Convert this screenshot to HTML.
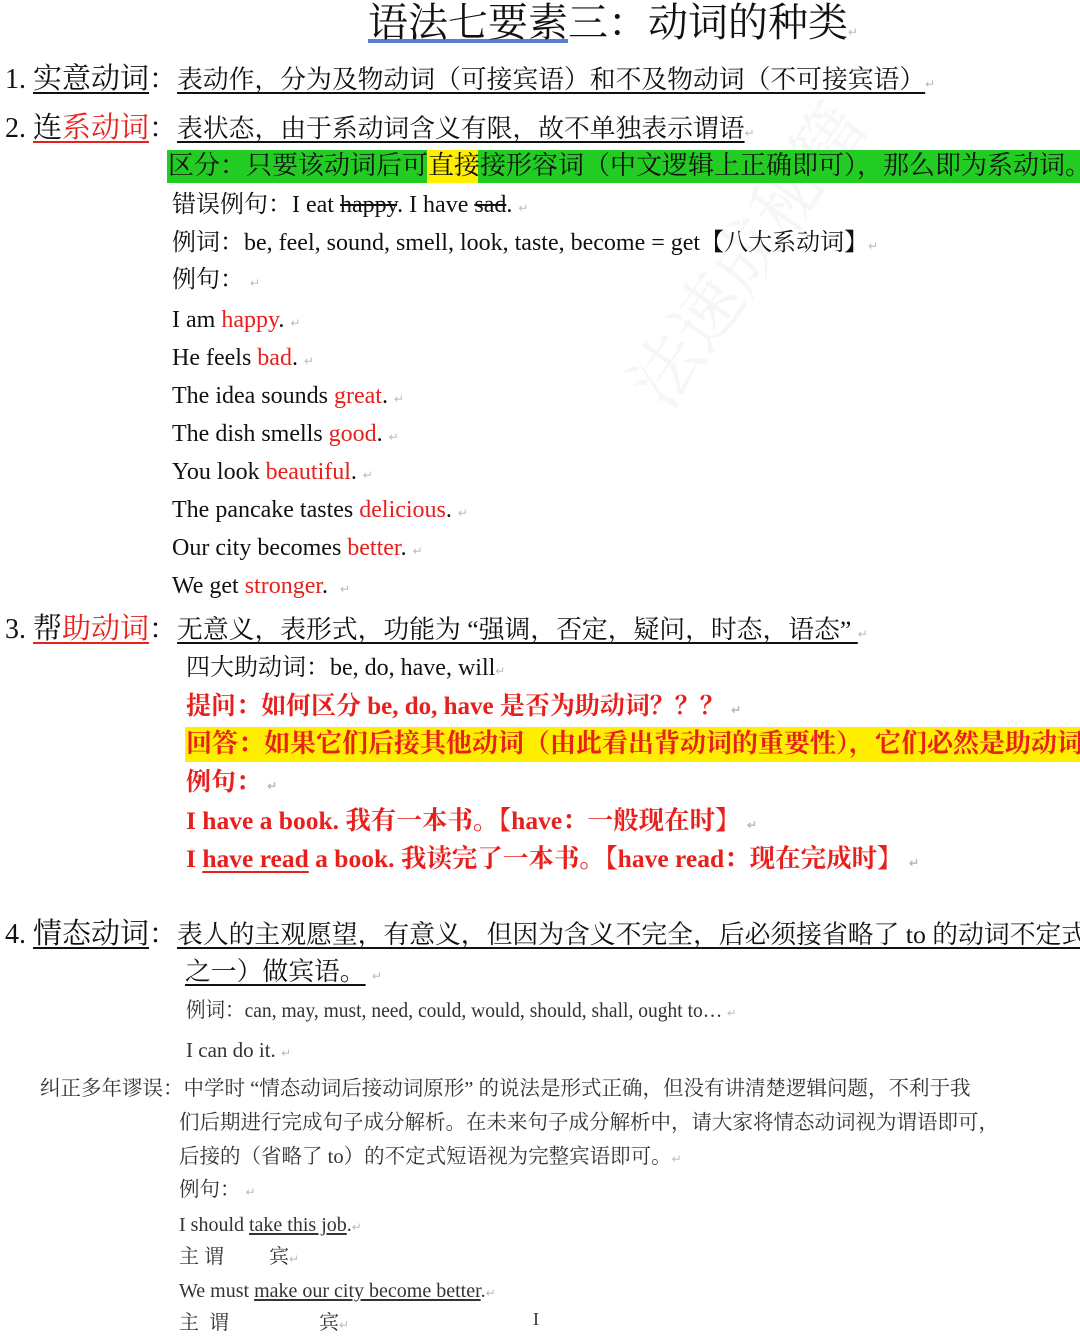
<!DOCTYPE html>
<html><head><meta charset="utf-8">
<style>
html,body{margin:0;padding:0;background:#fff;}
body{width:1080px;height:1342px;position:relative;overflow:hidden;font-family:"Liberation Serif","Noto Serif CJK SC",serif;color:#111;}
.l{position:absolute;white-space:nowrap;line-height:1;}
.r{color:#e8201c;}
.u{text-decoration:underline;text-underline-offset:4px;}
.b{font-weight:bold;}
.m{color:#bbb;font-size:12px;}
.g{color:#333;}
</style></head><body>
<div class="l" style="left:620px;top:380px;font-size:70px;color:#f6f6f6;transform:rotate(-55deg);transform-origin:left top;">法速成秘籍</div>

<div class="l" style="left:368px;top:3px;font-size:40px;"><span style="text-decoration:underline;text-decoration-color:#5b7fd0;text-underline-offset:3px;">语法七要素</span>三：动词的种类<span class="m">↵</span></div>

<div class="l" style="left:5px;top:65px;font-size:28px;">1. <span class="u" style="font-size:29px">实意动词</span>：<span class="u" style="font-size:25.8px">表动作，分为及物动词（可接宾语）和不及物动词（不可接宾语）</span><span class="m">↵</span></div>

<div class="l" style="left:5px;top:114px;font-size:28px;">2. <span class="u" style="font-size:29px;text-decoration-color:#e8201c">连<span class="r">系动词</span></span>：<span class="u" style="font-size:25.8px">表状态，由于系动词含义有限，故不单独表示谓语</span><span class="m">↵</span></div>

<div style="position:absolute;left:167px;top:150px;width:913px;height:33px;background:#22cc22;"></div>
<div style="position:absolute;left:427px;top:150px;width:51px;height:33px;background:#ffee00;"></div>
<div class="l" style="left:168px;top:153px;font-size:26px;">区分：只要该动词后可直接接形容词（中文逻辑上正确即可），那么即为系动词。</div>

<div class="l" style="left:172px;top:193px;font-size:24px;">错误例句：I eat <s>happy</s>. I have <s>sad</s>. <span class="m">↵</span></div>
<div class="l" style="left:172px;top:231px;font-size:24px;">例词：be, feel, sound, smell, look, taste, become = get【八大系动词】<span class="m">↵</span></div>
<div class="l" style="left:172px;top:268px;font-size:24px;">例句： <span class="m">↵</span></div>
<div class="l" style="left:172px;top:308px;font-size:24px;">I am <span class="r">happy</span>. <span class="m">↵</span></div>
<div class="l" style="left:172px;top:346px;font-size:24px;">He feels <span class="r">bad</span>. <span class="m">↵</span></div>
<div class="l" style="left:172px;top:384px;font-size:24px;">The idea sounds <span class="r">great</span>. <span class="m">↵</span></div>
<div class="l" style="left:172px;top:422px;font-size:24px;">The dish smells <span class="r">good</span>. <span class="m">↵</span></div>
<div class="l" style="left:172px;top:460px;font-size:24px;">You look <span class="r">beautiful</span>. <span class="m">↵</span></div>
<div class="l" style="left:172px;top:498px;font-size:24px;">The pancake tastes <span class="r">delicious</span>. <span class="m">↵</span></div>
<div class="l" style="left:172px;top:536px;font-size:24px;">Our city becomes <span class="r">better</span>. <span class="m">↵</span></div>
<div class="l" style="left:172px;top:574px;font-size:24px;">We get <span class="r">stronger</span>. &nbsp;<span class="m">↵</span></div>

<div class="l" style="left:5px;top:615px;font-size:28px;">3. <span class="u" style="font-size:29px;text-decoration-color:#e8201c">帮<span class="r">助动词</span></span>：<span class="u" style="font-size:25.8px">无意义，表形式，功能为 “强调，否定，疑问，时态，语态” </span><span class="m">↵</span></div>

<div class="l" style="left:186px;top:656px;font-size:24px;">四大助动词：be, do, have, will<span class="m">↵</span></div>
<div class="l r b" style="left:186px;top:694px;font-size:25px;">提问：如何区分 be, do, have 是否为助动词？？？ <span class="m">↵</span></div>
<div style="position:absolute;left:185px;top:727px;width:895px;height:35px;background:#ffee00;"></div>
<div class="l r b" style="left:186px;top:731px;font-size:26px;">回答：如果它们后接其他动词（由此看出背动词的重要性），它们必然是助动词</div>
<div class="l r b" style="left:186px;top:770px;font-size:25px;">例句： <span class="m">↵</span></div>
<div class="l r b" style="left:186px;top:808px;font-size:25.5px;">I have a book. 我有一本书。【have：一般现在时】 <span class="m">↵</span></div>
<div class="l r b" style="left:186px;top:846px;font-size:25.5px;">I <span class="u">have read</span> a book. 我读完了一本书。【have read：现在完成时】 <span class="m">↵</span></div>

<div class="l" style="left:5px;top:920px;font-size:28px;">4. <span class="u" style="font-size:29px">情态动词</span>：<span class="u" style="font-size:25.8px">表人的主观愿望，有意义，但因为含义不完全，后必须接省略了 to 的动词不定式</span></div>
<div class="l" style="left:185px;top:959px;font-size:25.8px;"><span class="u">之一）做宾语。</span> <span class="m">↵</span></div>

<div class="l g" style="left:186px;top:1000px;font-size:21px;transform:scaleX(0.93);transform-origin:left;">例词：can, may, must, need, could, would, should, shall, ought to… <span class="m">↵</span></div>
<div class="l g" style="left:186px;top:1040px;font-size:21px;">I can do it. <span class="m">↵</span></div>
<div class="l g" style="left:40px;top:1079px;font-size:20.5px;">纠正多年谬误：中学时 “情态动词后接动词原形” 的说法是形式正确，但没有讲清楚逻辑问题，不利于我</div>
<div class="l g" style="left:179px;top:1113px;font-size:20.5px;">们后期进行完成句子成分解析。在未来句子成分解析中，请大家将情态动词视为谓语即可，</div>
<div class="l g" style="left:179px;top:1147px;font-size:20.5px;">后接的（省略了 to）的不定式短语视为完整宾语即可。<span class="m">↵</span></div>
<div class="l g" style="left:179px;top:1180px;font-size:20.5px;">例句： <span class="m">↵</span></div>
<div class="l g" style="left:179px;top:1215px;font-size:20px;">I should <span class="u" style="text-underline-offset:2px">take this job</span>.<span class="m">↵</span></div>
<div class="l g" style="left:179px;top:1247px;font-size:20px;">主 谓 &nbsp; &nbsp; &nbsp; &nbsp; 宾<span class="m">↵</span></div>
<div class="l g" style="left:179px;top:1281px;font-size:20px;">We must <span class="u" style="text-underline-offset:2px">make our city become better</span>.<span class="m">↵</span></div>
<div class="l g" style="left:179px;top:1313px;font-size:20px;">主 &nbsp;谓 &nbsp; &nbsp; &nbsp; &nbsp; &nbsp; &nbsp; &nbsp; &nbsp; &nbsp;宾<span class="m">↵</span></div>
<div class="l g" style="left:533px;top:1310px;font-size:18px;">I</div>
</body></html>
